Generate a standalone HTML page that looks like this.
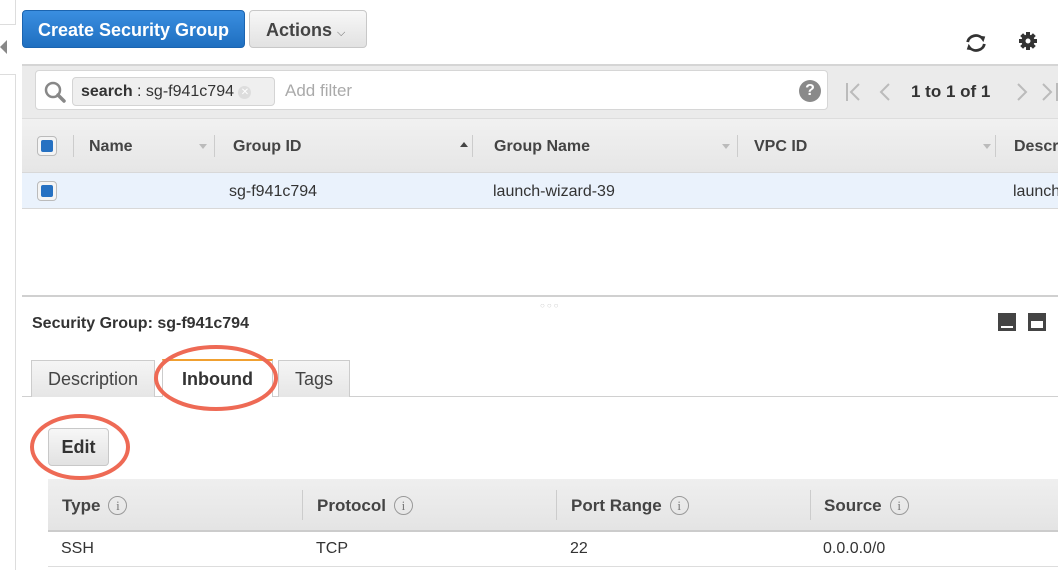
<!DOCTYPE html>
<html><head><style>
*{margin:0;padding:0;box-sizing:border-box}
body{width:1058px;height:570px;overflow:hidden;background:#fff;font-family:"Liberation Sans",Arial,sans-serif;position:relative;color:#333}
.a{position:absolute}
.b{font-weight:bold}
.cb{position:absolute;width:20px;height:20px;border:1px solid #bbb;border-radius:4px;background:#f4f4f4}
.cb:after{content:"";position:absolute;left:3px;top:3px;width:12px;height:12px;background:#2671c2;border-radius:2px}
.th{position:absolute;font-size:16px;font-weight:bold;color:#444}
.sep{position:absolute;width:1px;background:#ccc}
.info{display:inline-block;width:19px;height:19px;border:1px solid #999;border-radius:50%;font-size:13px;font-weight:normal;text-align:center;line-height:17px;color:#777;margin-left:8px;vertical-align:1px;font-family:"Liberation Serif",serif}
</style></head><body>
<div class="a" style="left:0;top:0;width:16px;height:25px;border-right:1px solid #ddd;border-bottom:1px solid #ddd"></div>
<div class="a" style="left:0;top:40px;width:0;height:0;border-top:7px solid transparent;border-bottom:7px solid transparent;border-right:7px solid #888"></div>
<div class="a" style="left:15px;top:74px;width:1px;height:496px;background:#ddd"></div>
<div class="a" style="left:0;top:74px;width:15px;height:1px;background:#ddd"></div>

<div class="a b" style="left:22px;top:10px;width:223px;height:38px;border-radius:4px;background:linear-gradient(#3a8ee0,#1f6fc0);border:1px solid #1b64b0;color:#fff;font-size:18px;line-height:38px;text-align:center">Create Security Group</div>
<div class="a b" style="left:249px;top:10px;width:118px;height:38px;border-radius:4px;background:linear-gradient(#f7f7f7,#e2e2e2);border:1px solid #c8c8c8;color:#444;font-size:18px;line-height:38px;padding-left:16px">Actions <span style="font-size:11px;color:#666;font-weight:normal">&#9013;</span></div>

<svg class="a" style="left:963px;top:31px" width="26" height="24" viewBox="0 0 28 26"><path d="M5 12a9 8 0 0 1 16-4" fill="none" stroke="#333" stroke-width="3"/><path d="M17 5l7 1-2 6z" fill="#333"/><path d="M23 14a9 8 0 0 1-16 4" fill="none" stroke="#333" stroke-width="3"/><path d="M11 21l-7-1 2-6z" fill="#333"/></svg>
<svg class="a" style="left:1017px;top:30px" width="22" height="22" viewBox="0 0 22 22"><g fill="#333"><circle cx="11" cy="11" r="6.5"/><rect x="9" y="2" width="4" height="18"/><rect x="2" y="9" width="18" height="4"/><rect x="9" y="2" width="4" height="18" transform="rotate(45 11 11)"/><rect x="9" y="2" width="4" height="18" transform="rotate(-45 11 11)"/></g><circle cx="11" cy="11" r="2.5" fill="#fff"/></svg>

<div class="a" style="left:22px;top:64px;width:1036px;height:54px;background:#ebebeb;border-top:2px solid #d5d5d5"></div>
<div class="a" style="left:35px;top:70px;width:793px;height:40px;background:#fff;border:1px solid #d6d6d6;border-radius:4px"></div>
<svg class="a" style="left:43px;top:80px" width="24" height="24" viewBox="0 0 24 24"><circle cx="10" cy="10" r="7" fill="none" stroke="#888" stroke-width="2.5"/><path d="M15 15l6 6" stroke="#888" stroke-width="3.5" stroke-linecap="round"/></svg>
<div class="a" style="left:72px;top:77px;width:203px;height:29px;background:#efefef;border:1px solid #d4d4d4;border-radius:4px;font-size:16px;line-height:27px;padding-left:8px;color:#333"><b>search</b> : sg-f941c794 <span style="display:inline-block;width:13px;height:13px;border-radius:50%;background:#ddd;color:#fff;font-size:10px;line-height:13px;text-align:center;vertical-align:1px">✕</span></div>
<div class="a" style="left:285px;top:81px;font-size:17px;color:#aaa">Add filter</div>
<div class="a b" style="left:799px;top:80px;width:22px;height:22px;border-radius:50%;background:#8a8a8a;color:#fff;font-size:16px;text-align:center;line-height:22px">?</div>
<svg class="a" style="left:845px;top:81px" width="215" height="22" viewBox="0 0 215 22"><g fill="none" stroke="#bbb" stroke-width="2"><path d="M2 2v18M14 3l-8 8 8 8"/><path d="M44 3l-8 8 8 8"/><path d="M173 3l8 8-8 8"/><path d="M198 3l8 8-8 8M212 2v18"/></g></svg>
<div class="a b" style="left:911px;top:82px;font-size:17px;color:#333">1 to 1 of 1</div>

<div class="a" style="left:22px;top:118px;width:1036px;height:55px;background:linear-gradient(#f1f1f1,#e6e6e6);border-top:1px solid #ddd;border-bottom:1px solid #d8d8d8"></div>
<div class="cb" style="left:37px;top:136px"></div>
<div class="sep" style="left:73px;top:135px;height:22px"></div>
<div class="th" style="left:89px;top:138px">Name</div>
<div class="a" style="left:199px;top:144px;border-left:4px solid transparent;border-right:4px solid transparent;border-top:5px solid #bbb"></div>
<div class="sep" style="left:214px;top:135px;height:22px"></div>
<div class="th" style="left:233px;top:138px">Group ID</div>
<div class="a" style="left:460px;top:142px;border-left:4px solid transparent;border-right:4px solid transparent;border-bottom:5px solid #444"></div>
<div class="sep" style="left:472px;top:135px;height:22px"></div>
<div class="th" style="left:494px;top:138px">Group Name</div>
<div class="a" style="left:722px;top:144px;border-left:4px solid transparent;border-right:4px solid transparent;border-top:5px solid #bbb"></div>
<div class="sep" style="left:737px;top:135px;height:22px"></div>
<div class="th" style="left:754px;top:138px">VPC ID</div>
<div class="a" style="left:983px;top:144px;border-left:4px solid transparent;border-right:4px solid transparent;border-top:5px solid #bbb"></div>
<div class="sep" style="left:995px;top:135px;height:22px"></div>
<div class="th" style="left:1014px;top:138px">Descr</div>

<div class="a" style="left:22px;top:173px;width:1036px;height:36px;background:#eaf2fc;border-bottom:1px solid #d8d8d8"></div>
<div class="cb" style="left:37px;top:181px"></div>
<div class="a" style="left:229px;top:183px;font-size:16px">sg-f941c794</div>
<div class="a" style="left:493px;top:183px;font-size:16px">launch-wizard-39</div>
<div class="a" style="left:1013px;top:183px;font-size:16px">launch</div>

<div class="a" style="left:22px;top:295px;width:1036px;height:2px;background:#d0d0d0"></div>
<div class="a" style="left:540px;top:301px;font-size:8px;color:#ccc;letter-spacing:2px">○○○</div>
<div class="a b" style="left:32px;top:315px;font-size:16px;color:#333">Security Group: sg-f941c794</div>
<div class="a" style="left:998px;top:313px;width:18px;height:18px;background:#444"><div style="position:absolute;left:3px;bottom:3px;width:12px;height:2px;background:#fff"></div></div>
<div class="a" style="left:1028px;top:313px;width:18px;height:18px;background:#444"><div style="position:absolute;left:3px;top:8px;width:12px;height:7px;background:#fff"></div></div>

<div class="a" style="left:22px;top:396px;width:1036px;height:1px;background:#d0d0d0"></div>
<div class="a" style="left:31px;top:360px;width:124px;height:37px;background:linear-gradient(#f5f5f5,#e6e6e6);border:1px solid #ccc;border-bottom:none;font-size:18px;text-align:center;line-height:36px;color:#444">Description</div>
<div class="a b" style="left:162px;top:359px;width:111px;height:38px;background:#fff;border:1px solid #ccc;border-top:2px solid #f0a030;border-bottom:none;font-size:18px;text-align:center;line-height:36px;color:#333">Inbound</div>
<div class="a" style="left:278px;top:360px;width:72px;height:37px;background:linear-gradient(#f5f5f5,#e6e6e6);border:1px solid #ccc;border-bottom:none;font-size:18px;text-align:center;line-height:36px;color:#444">Tags</div>

<div class="a b" style="left:48px;top:428px;width:61px;height:38px;border-radius:4px;background:linear-gradient(#f7f7f7,#e2e2e2);border:1px solid #c8c8c8;font-size:18px;text-align:center;line-height:36px;color:#333">Edit</div>

<div class="a" style="left:48px;top:479px;width:1010px;height:53px;background:linear-gradient(#efefef,#e4e4e4);border-bottom:2px solid #ccc"></div>
<div class="sep" style="left:302px;top:490px;height:30px"></div>
<div class="sep" style="left:556px;top:490px;height:30px"></div>
<div class="sep" style="left:810px;top:490px;height:30px"></div>
<div class="th" style="left:62px;top:496px;font-size:17px">Type<span class="info">i</span></div>
<div class="th" style="left:317px;top:496px;font-size:17px">Protocol<span class="info">i</span></div>
<div class="th" style="left:571px;top:496px;font-size:17px">Port Range<span class="info">i</span></div>
<div class="th" style="left:824px;top:496px;font-size:17px">Source<span class="info">i</span></div>
<div class="a" style="left:61px;top:540px;font-size:16px">SSH</div>
<div class="a" style="left:316px;top:540px;font-size:16px">TCP</div>
<div class="a" style="left:570px;top:540px;font-size:16px">22</div>
<div class="a" style="left:823px;top:540px;font-size:16px">0.0.0.0/0</div>
<div class="a" style="left:48px;top:566px;width:1010px;height:1px;background:#ddd"></div>

<svg class="a" style="left:0;top:0" width="1058" height="570"><g fill="none" stroke="#ee6a55" stroke-width="4"><ellipse cx="216" cy="378" rx="60" ry="31"/><ellipse cx="80" cy="447" rx="48" ry="31"/></g></svg>
</body></html>
